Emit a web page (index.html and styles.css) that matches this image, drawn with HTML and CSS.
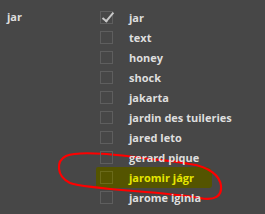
FILE: index.html
```html
<!DOCTYPE html>
<html lang="en">
<head>
    <meta charset="UTF-8">
    <title>Filter</title>
    <link rel="stylesheet" href="styles.css">
</head>
<body>
    <div class="filter">
        <div class="filter-query">jar</div>
        <ul class="options">
            <li class="option"><span class="box checked"></span><span class="label">jar</span></li>
            <li class="option"><span class="box"></span><span class="label">text</span></li>
            <li class="option"><span class="box"></span><span class="label">honey</span></li>
            <li class="option"><span class="box"></span><span class="label">shock</span></li>
            <li class="option"><span class="box"></span><span class="label">jakarta</span></li>
            <li class="option"><span class="box"></span><span class="label">jardin des tuileries</span></li>
            <li class="option"><span class="box"></span><span class="label">jared leto</span></li>
            <li class="option"><span class="box"></span><span class="label">gerard pique</span></li>
            <li class="option marked"><span class="box"></span><span class="label">jaromir jágr</span></li>
            <li class="option"><span class="box"></span><span class="label">jarome iginla</span></li>
        </ul>
    </div>
    <!-- hand-drawn annotation on top -->
    <svg class="annotation" width="265" height="214" viewBox="0 0 265 214">
        <path d="M150 159 C120 155 80 150 66 156 C56 161 56 176 70 183 C90 190 160 191 200 198 C215 201 222 196 221 186 C220 176 210 167 190 164 C175 161 160 160 150 159"
              fill="none" stroke="#f00" stroke-width="2.2" stroke-linecap="round"/>
    </svg>
</body>
</html>
```

FILE: styles.css
```css
body {
    margin: 0;
    width: 265px;
    height: 214px;
    background-color: #474747;
    color: #dedede;
    font-family: 'Open Sans', 'DejaVu Sans', sans-serif;
    font-weight: bold;
    font-size: 11px;
    overflow: hidden;
    position: relative;
}

.filter {
    display: flex;
    padding: 7px 0 0 7px;
}

.filter-query {
    width: 93px;
    line-height: 20px;
}

.options {
    list-style: none;
    margin: 0;
    padding: 0;
}

.option {
    display: flex;
    align-items: center;
    height: 20px;
    position: relative;
}

.box {
    width: 11px;
    height: 11px;
    border: 1px solid #5e5e5e;
    margin-right: 16px;
    position: relative;
    z-index: 1;
}

.box.checked::after {
    content: '';
    position: absolute;
    left: 4px;
    top: -2px;
    width: 4px;
    height: 10px;
    border: solid #c8c8c8;
    border-width: 0 2px 2px 0;
    transform: rotate(40deg);
}

.label {
    position: relative;
    z-index: 1;
    white-space: nowrap;
}

/* marker highlight */
.option.marked::before {
    content: '';
    position: absolute;
    left: -4px;
    top: 0;
    width: 116px;
    height: 21px;
    background-color: #545400;
    border-radius: 2px 6px 3px 2px;
}

.option.marked .label {
    color: #e6e600;
}

.option.marked .box {
    border-color: #6a6a1a;
}

.annotation {
    position: absolute;
    left: 0;
    top: 0;
}
```
